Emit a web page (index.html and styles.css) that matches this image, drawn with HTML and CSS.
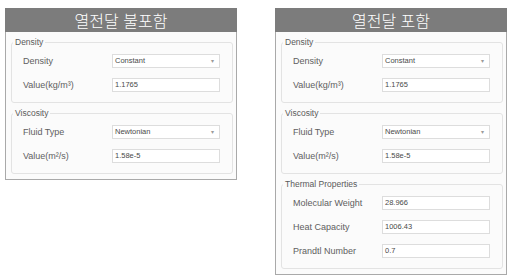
FILE: index.html
```html
<!DOCTYPE html>
<html lang="ko">
<head>
<meta charset="utf-8">
<title>Fluid properties</title>
<link rel="stylesheet" href="styles.css">
</head>
<body>
<div class="page">
  <section class="panel">
    <div class="panel-title">열전달 불포함</div>
    <div class="panel-body">
      <fieldset class="group">
        <legend>Density</legend>
        <div class="row"><span class="label">Density</span><div class="field select">Constant<span class="caret">▾</span></div></div>
        <div class="row"><span class="label">Value(kg/m³)</span><div class="field">1.1765</div></div>
      </fieldset>
      <fieldset class="group">
        <legend>Viscosity</legend>
        <div class="row"><span class="label">Fluid Type</span><div class="field select">Newtonian<span class="caret">▾</span></div></div>
        <div class="row"><span class="label">Value(m²/s)</span><div class="field">1.58e-5</div></div>
      </fieldset>
    </div>
  </section>

  <section class="panel">
    <div class="panel-title">열전달 포함</div>
    <div class="panel-body">
      <fieldset class="group">
        <legend>Density</legend>
        <div class="row"><span class="label">Density</span><div class="field select">Constant<span class="caret">▾</span></div></div>
        <div class="row"><span class="label">Value(kg/m³)</span><div class="field">1.1765</div></div>
      </fieldset>
      <fieldset class="group">
        <legend>Viscosity</legend>
        <div class="row"><span class="label">Fluid Type</span><div class="field select">Newtonian<span class="caret">▾</span></div></div>
        <div class="row"><span class="label">Value(m²/s)</span><div class="field">1.58e-5</div></div>
      </fieldset>
      <fieldset class="group">
        <legend>Thermal Properties</legend>
        <div class="row"><span class="label">Molecular Weight</span><div class="field">28.966</div></div>
        <div class="row"><span class="label">Heat Capacity</span><div class="field">1006.43</div></div>
        <div class="row"><span class="label">Prandtl Number</span><div class="field">0.7</div></div>
      </fieldset>
    </div>
  </section>
</div>
</body>
</html>
```

FILE: styles.css
```css
* { box-sizing: border-box; }

html, body {
  margin: 0;
  padding: 0;
  background: #ffffff;
}

.page {
  display: flex;
  align-items: flex-start;
  gap: 38px;
  padding: 8px 0 0 5px;
  font-family: "Liberation Sans", Arial, sans-serif;
}

.panel {
  width: 232px;
  border: 1px solid #a9a9a9;
  border-top: none;
  background: #fbfbfb;
}

.panel-title {
  height: 24px;
  margin: 0 -1px;
  background: #7c7c7c;
  color: #ffffff;
  font-family: "Noto Sans CJK KR", "Noto Sans", sans-serif;
  font-weight: 300;
  font-size: 16px;
  line-height: 24px;
  text-align: center;
}

.panel-body {
  display: flex;
  flex-direction: column;
  gap: 4px;
  padding: 4px 3px 5px 5px;
}

.group {
  margin: 0;
  padding: 1px 0 5px 0;
  border: 1px solid #e3e3e3;
  border-radius: 3px;
  min-width: 0;
}

.group legend {
  margin-left: 1px;
  padding: 0 2px;
  font-size: 8.5px;
  line-height: 12px;
  color: #5a5a5a;
}

.row {
  display: flex;
  align-items: center;
  height: 24px;
  padding-left: 11px;
}

.label {
  width: 89px;
  font-size: 9px;
  color: #606060;
}

.field {
  position: relative;
  width: 108px;
  height: 14px;
  padding-left: 2px;
  border: 1px solid #dddddd;
  background: #ffffff;
  font-size: 7.5px;
  line-height: 12px;
  color: #4a4a4a;
}

.caret {
  position: absolute;
  right: 5px;
  top: 0;
  font-size: 6px;
  color: #9a9a9a;
}
```
